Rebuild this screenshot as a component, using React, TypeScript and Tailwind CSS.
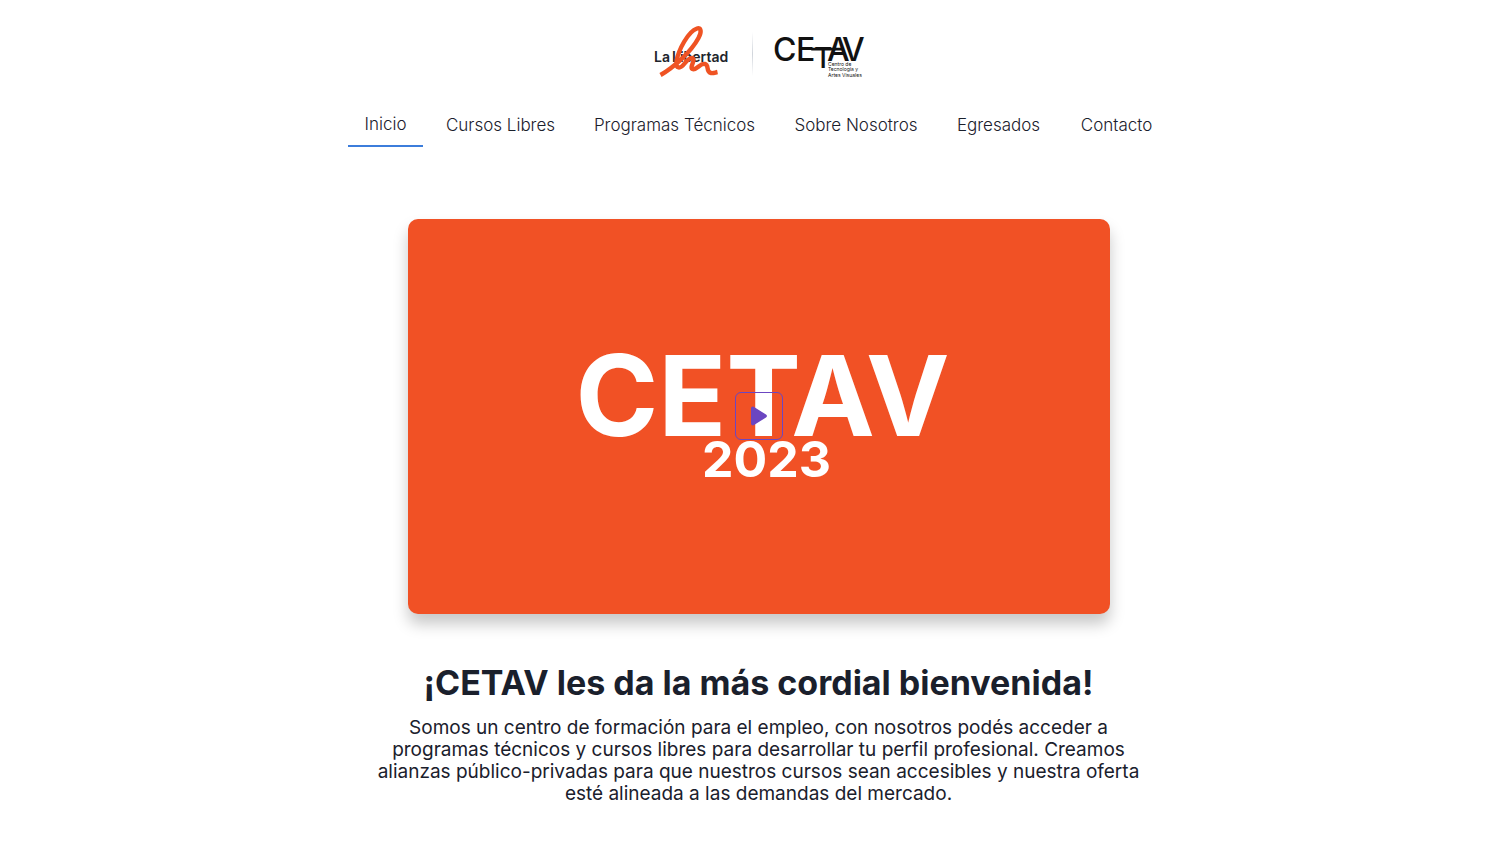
const tabs = [
  { label: "Inicio", width: "w-[75px]" },
  { label: "Cursos Libres", width: "w-[139px]" },
  { label: "Programas Técnicos", width: "w-[193px]" },
  { label: "Sobre Nosotros", width: "w-[154px]" },
  { label: "Egresados", width: "w-[115px]" },
  { label: "Contacto", width: "w-[105px]" },
];

function LibertadLogo() {
  return (
    <svg width="81" height="60" viewBox="0 0 81 60" role="img" aria-label="La Libertad">
      <g fontSize="14" fontWeight="600" fill="#20242b" className="font-['Inter',sans-serif]">
        <text x="3" y="38">La</text>
        <text x="21" y="38">Libertad</text>
      </g>
      <path
        d="M9.500 51C22 44 40 28 47.500 14C51 7.500 50 3.200 46 4.500C37 7.500 27.500 26 25.500 37C24.500 45 29 45.500 34 39C37 35 41.500 32.500 42.500 35C43.500 38 38 44 42 45.200C46 46 49 39 54 40C58.500 41 54.500 48 60 49C62.500 49.400 64 48.500 66.500 48"
        fill="none"
        stroke="#ef5323"
        strokeWidth="4.400"
        strokeLinejoin="round"
      />
    </svg>
  );
}

function CetavLogo() {
  return (
    <svg width="93" height="48" viewBox="0 0 93 48" role="img" aria-label="CETAV, Centro de Tecnología y Artes Visuales" fill="#111111" className="font-['Inter',sans-serif]">
      <g fontSize="32" fontWeight="500">
        <text x="0" y="31">C</text>
        <text x="23" y="31">E</text>
        <text x="41" y="38" fontSize="28">T</text>
        <text x="54" y="31">A</text>
        <text x="69" y="31">V</text>
      </g>
      <path d="M39 19.200H68" fill="none" stroke="#111111" strokeWidth="2.800" strokeLinecap="round" />
      <g fontSize="5" fontWeight="400">
        <text x="55" y="36">Centro de</text>
        <text x="55" y="41">Tecnología y</text>
        <text x="55" y="47">Artes Visuales</text>
      </g>
    </svg>
  );
}

export default function App() {
  return (
    <div className="min-h-screen bg-white pl-2 font-['Inter',sans-serif] text-[#1a202c]">
      <header className="flex flex-col items-center">
        <a href="#inicio" className="flex h-[104px] items-center justify-center gap-5 pt-1">
          <LibertadLogo />
          <span className="h-11 w-px bg-linear-to-b from-white via-gray-300 to-white" />
          <CetavLogo />
        </a>
        <nav className="flex gap-2">
          {tabs.map((tab, i) => (
            <a
              key={tab.label}
              href="#"
              aria-current={i === 0 ? "page" : undefined}
              className={`flex h-[43px] items-center justify-center text-[17px] font-light whitespace-nowrap ${tab.width} ${
                i === 0 ? "border-b-2 border-[#3c7ddb]" : ""
              }`}
            >
              {tab.label}
            </a>
          ))}
        </nav>
      </header>
      <main className="mx-auto flex max-w-[768px] flex-col items-center pt-[72px]">
        <section className="relative flex aspect-[702/395] w-full max-w-[702px] flex-col items-center justify-center rounded-[10px] bg-[#f15125] pt-1 pl-2 text-white shadow-[0_10px_15px_rgba(0,0,0,0.22)]">
          <span className="text-[112px] leading-[80px] font-bold">CETAV</span>
          <span className="pl-2 text-[50px] leading-[48px] font-bold">2023</span>
          <button
            type="button"
            aria-label="Reproducir video"
            className="absolute inset-x-0 top-0 bottom-px m-auto flex size-12 items-center justify-center rounded-md border border-[#6b46c1] text-[#6b46c1]"
          >
            <svg width="16" height="20" viewBox="0 0 16 20" fill="currentColor">
              <path d="M0 2.500C0 1 1.500 0 3 1L15 8.500C16.300 9.400 16.300 10.600 15 11.500L3 19C1.500 20 0 19 0 17.500Z" />
            </svg>
          </button>
        </section>
        <h1 className="mt-12 text-center text-[34px] leading-[42px] font-bold">¡CETAV les da la más cordial bienvenida!</h1>
        <p className="mt-[13px] text-center text-[19px] leading-[22px]">
          Somos un centro de formación para el empleo, con nosotros podés acceder a programas técnicos y cursos libres para desarrollar tu perfil profesional. Creamos alianzas público-privadas para que nuestros cursos sean accesibles y nuestra oferta esté alineada a las demandas del mercado.
        </p>
      </main>
    </div>
  );
}
